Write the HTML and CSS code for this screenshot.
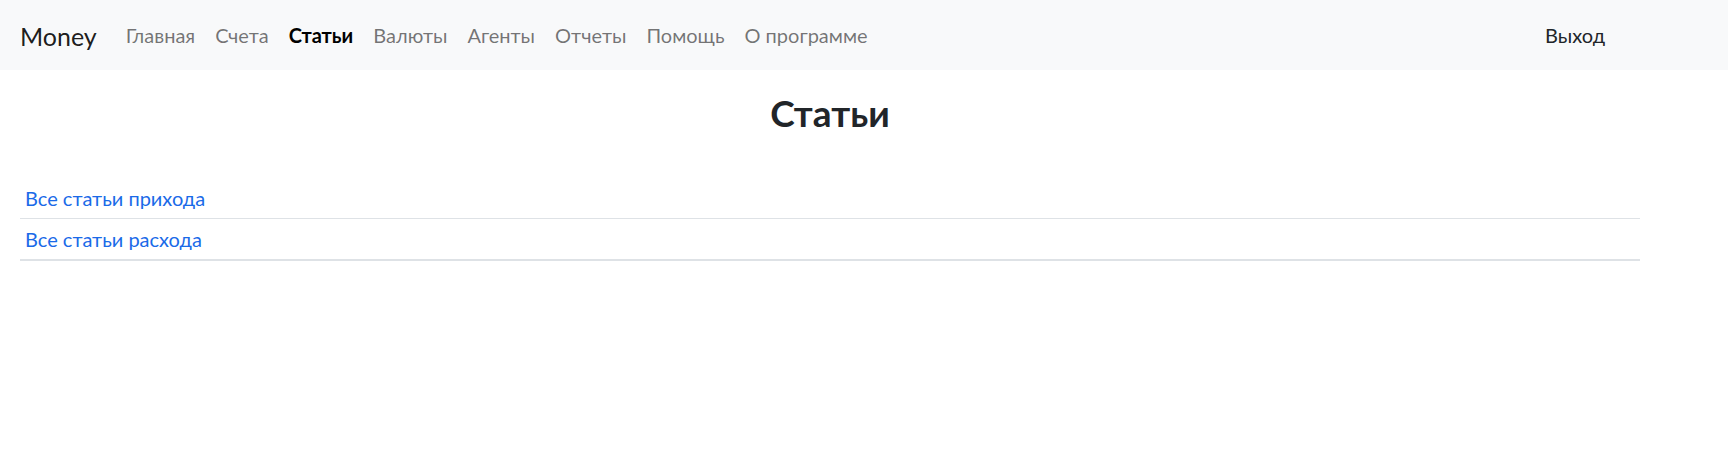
FILE: index.html
```html
<!DOCTYPE html>
<html lang="ru">
<head>
<meta charset="utf-8">
<title>Статьи</title>
<link rel="stylesheet" href="styles.css">
</head>
<body>
<nav class="navbar">
  <a class="brand" href="#">Money</a>
  <ul class="nav">
    <li><a class="nav-link" href="#">Главная</a></li>
    <li><a class="nav-link" href="#">Счета</a></li>
    <li><a class="nav-link active" href="#">Статьи</a></li>
    <li><a class="nav-link" href="#">Валюты</a></li>
    <li><a class="nav-link" href="#">Агенты</a></li>
    <li><a class="nav-link" href="#">Отчеты</a></li>
    <li><a class="nav-link" href="#">Помощь</a></li>
    <li><a class="nav-link" href="#">О программе</a></li>
  </ul>
  <a class="logout" href="#">Выход</a>
</nav>
<main class="content">
  <h1 class="title">Статьи</h1>
  <div class="list">
    <div class="row"><a href="#">Все статьи прихода</a></div>
    <div class="row last"><a href="#">Все статьи расхода</a></div>
  </div>
</main>
</body>
</html>
```

FILE: styles.css
```css
* { box-sizing: border-box; }
body {
  margin: 0;
  font-family: Lato, "Open Sans", sans-serif;
  font-size: 20px;
  line-height: 1.5;
  color: #212529;
  background: #fff;
}
a { text-decoration: none; }
.navbar {
  height: 70px;
  background: #f8f9fa;
  display: flex;
  align-items: center;
  padding: 0 20px;
}
.brand {
  font-size: 25px;
  line-height: 37px;
  padding-top: 3px;
  margin-right: 19px;
  color: rgba(0, 0, 0, 0.9);
}
.nav {
  display: flex;
  list-style: none;
  margin: 0;
  padding: 0;
}
.nav-link {
  display: block;
  padding: 0 10px;
  line-height: 30px;
  color: rgba(0, 0, 0, 0.55);
}
.nav-link.active {
  color: #000;
  font-weight: 700;
}
.logout {
  margin-left: auto;
  margin-right: 103px;
  line-height: 30px;
  color: #212529;
}
.content {
  padding: 0 88px 0 20px;
}
.title {
  text-align: center;
  font-size: 37px;
  line-height: 42px;
  font-weight: 700;
  margin: 22px 0 0;
}
.list {
  margin-top: 44px;
}
.row {
  padding: 5px 5px;
  border-bottom: 1px solid #dee2e6;
}
.row.last {
  border-bottom-width: 2px;
}
.row a {
  color: #1a6ae8;
}
```
